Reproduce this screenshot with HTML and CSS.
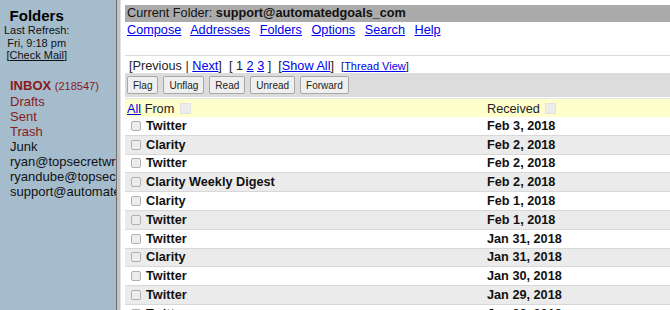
FILE: index.html
```html
<!DOCTYPE html>
<html lang="en">

<head>
  <meta charset="UTF-8">
  <title>SquirrelMail</title>
  <link rel="stylesheet" href="styles.css">
</head>

<body>
  <!-- Left folder frame -->
  <aside class="folders">
    <div class="refresh">
      <div class="folders-title">Folders</div>
      <div class="small">Last Refresh:</div>
      <div class="small">Fri, 9:18 pm</div>
      <div class="small">[<a href="#" class="check">Check Mail</a>]</div>
    </div>
    <ul class="folder-list">
      <li class="red"><b>INBOX</b> <span class="count">(218547)</span></li>
      <li class="red">Drafts</li>
      <li class="red">Sent</li>
      <li class="red">Trash</li>
      <li>Junk</li>
      <li>ryan@topsecretwriters</li>
      <li>ryandube@topsecretwriters</li>
      <li>support@automatedgoals_com</li>
    </ul>
  </aside>
  <div class="divider"></div>

  <!-- Right message list frame -->
  <main class="right">
    <div class="current">Current Folder: <b>support@automatedgoals_com</b></div>
    <nav class="menu">
      <a href="#">Compose</a>
      <a href="#">Addresses</a>
      <a href="#">Folders</a>
      <a href="#">Options</a>
      <a href="#">Search</a>
      <a href="#">Help</a>
    </nav>

    <div class="paging">
      [Previous | <a href="#">Next</a>]&nbsp;&nbsp;[ 1 <a href="#">2</a> <a href="#">3</a> ]&nbsp;&nbsp;[<a href="#">Show All</a>]&nbsp;&nbsp;<span class="thread">[<a href="#">Thread View</a>]</span>
    </div>

    <div class="actions">
      <button>Flag</button>
      <button>Unflag</button>
      <button>Read</button>
      <button>Unread</button>
      <button>Forward</button>
    </div>

    <table class="msgs">
      <thead>
        <tr>
          <th class="c-from"><a href="#">All</a> From <span class="sort"></span></th>
          <th class="c-date">Received <span class="sort"></span></th>
        </tr>
      </thead>
      <tbody>
        <tr><td><span class="box"></span>Twitter</td><td>Feb 3, 2018</td></tr>
        <tr><td><span class="box"></span>Clarity</td><td>Feb 2, 2018</td></tr>
        <tr><td><span class="box"></span>Twitter</td><td>Feb 2, 2018</td></tr>
        <tr><td><span class="box"></span>Clarity Weekly Digest</td><td>Feb 2, 2018</td></tr>
        <tr><td><span class="box"></span>Clarity</td><td>Feb 1, 2018</td></tr>
        <tr><td><span class="box"></span>Twitter</td><td>Feb 1, 2018</td></tr>
        <tr><td><span class="box"></span>Twitter</td><td>Jan 31, 2018</td></tr>
        <tr><td><span class="box"></span>Clarity</td><td>Jan 31, 2018</td></tr>
        <tr><td><span class="box"></span>Twitter</td><td>Jan 30, 2018</td></tr>
        <tr><td><span class="box"></span>Twitter</td><td>Jan 29, 2018</td></tr>
        <tr><td><span class="box"></span>Twitter</td><td>Jan 28, 2018</td></tr>
      </tbody>
    </table>
  </main>
</body>

</html>
```

FILE: styles.css
```css
* {
  margin: 0;
  padding: 0;
  box-sizing: border-box;
}

body {
  font-family: 'Liberation Sans', Arial, sans-serif;
  font-size: 13px;
  color: #000;
  display: flex;
  height: 310px;
  overflow: hidden;
  background: #fff;
}

a {
  color: #0000ee;
}

/* left frame */
.folders {
  width: 116px;
  flex-shrink: 0;
  background-color: #a5bccd;
  overflow: hidden;
  white-space: nowrap;
  padding-top: 7px;
}

.refresh {
  display: inline-block;
  text-align: center;
  padding-left: 4px;
}

.folders-title {
  font-size: 15px;
  font-weight: bold;
  line-height: 17px;
}

.small {
  font-size: 11px;
  line-height: 12.5px;
  color: #111;
}

.check {
  color: #111;
}

.folder-list {
  list-style: none;
  margin-top: 16px;
  padding-left: 10px;
  font-size: 13px;
  line-height: 15px;
  color: #111;
}

.red {
  color: #8b1a1a;
}

.count {
  font-size: 11px;
}

.divider {
  width: 5px;
  flex-shrink: 0;
  border-left: 1px solid #6e6e6e;
  background: #c4c4c4;
  border-right: 1px solid #e2e2e2;
}

/* right frame */
.right {
  flex: 1;
  padding: 5px 0 0 4px;
  overflow: hidden;
  white-space: nowrap;
  font-size: 12.7px;
}

.current {
  background-color: #ababab;
  height: 17px;
  line-height: 17px;
  padding-left: 2px;
  color: #111;
}

.menu {
  padding-left: 2px;
  line-height: 17px;
}

.menu a {
  margin-right: 6px;
}

.paging {
  margin-top: 16px;
  border-top: 1px solid #dcdcdc;
  padding: 2px 0 0 4px;
  height: 18px;
  line-height: 16px;
  color: #222;
}

.thread {
  font-size: 11px;
}

.actions {
  background-color: #dcdcdc;
  height: 24px;
  padding: 3px 0 0 2px;
  display: flex;
  gap: 5px;
}

button {
  font-family: 'Liberation Sans', Arial, sans-serif;
  font-size: 10px;
  height: 18px;
  padding: 0 5px;
  background: #efefef;
  color: #222;
  border: 1px solid #a8a8a8;
  border-radius: 2px;
}

.msgs {
  width: 100%;
  border-collapse: collapse;
  margin-top: 1px;
  border-top: 1px solid #e6e6e6;
}

.msgs th {
  background-color: #ffffcc;
  font-weight: normal;
  text-align: left;
  height: 18px;
  padding-top: 2px;
  color: #222;
}

.msgs th.c-from {
  padding-left: 2px;
}

.c-date {
  width: 183px;
}

.sort {
  display: inline-block;
  width: 11px;
  height: 11px;
  background: #ececec;
  border: 1px solid #e2e2e2;
  vertical-align: -1px;
  margin-left: 2px;
}

.msgs td {
  font-weight: bold;
  color: #111;
  height: 18.8px;
  border-bottom: 1px solid #d8d8d8;
  padding: 0;
}

.msgs td:first-child {
  padding-left: 6px;
}

.msgs tbody tr:nth-child(even) td {
  background-color: #ebebeb;
}

.box {
  display: inline-block;
  width: 10px;
  height: 10px;
  border: 1px solid #b0b0b0;
  border-radius: 2px;
  background: #ececec;
  margin-right: 5px;
  vertical-align: -1px;
}
```
